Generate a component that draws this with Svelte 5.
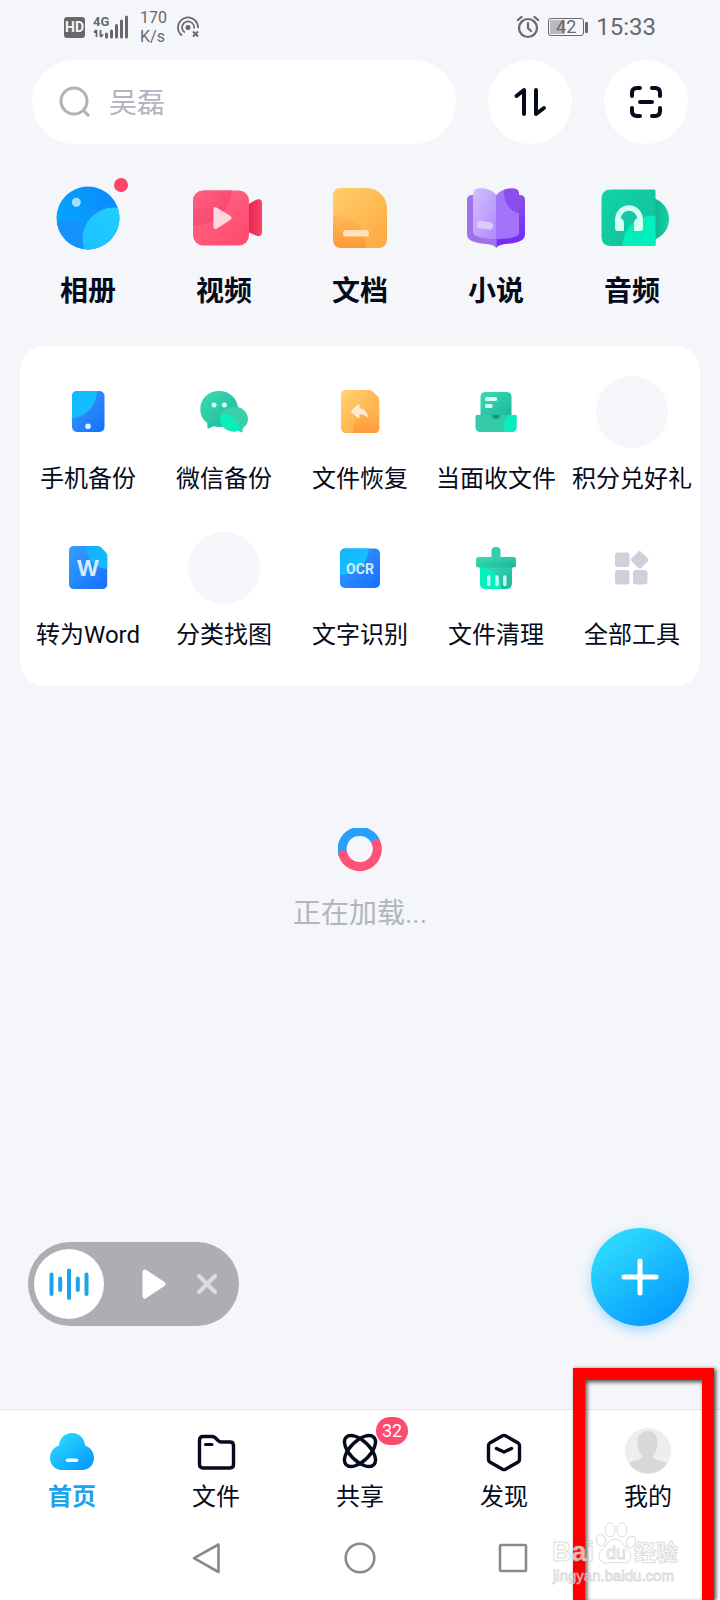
<script>
  const shortcuts = [
    { id: 'photo', label: '相册' },
    { id: 'video', label: '视频' },
    { id: 'doc', label: '文档' },
    { id: 'novel', label: '小说' },
    { id: 'audio', label: '音频' }
  ];
  const tools = [
    { id: 'phone', label: '手机备份' },
    { id: 'wechat', label: '微信备份' },
    { id: 'restore', label: '文件恢复' },
    { id: 'receive', label: '当面收文件' },
    { id: 'empty', label: '积分兑好礼' },
    { id: 'word', label: '转为Word' },
    { id: 'empty', label: '分类找图' },
    { id: 'ocr', label: '文字识别' },
    { id: 'clean', label: '文件清理' },
    { id: 'all', label: '全部工具' }
  ];
  const tabs = [
    { id: 'home', label: '首页' },
    { id: 'files', label: '文件' },
    { id: 'share', label: '共享', badge: 32 },
    { id: 'discover', label: '发现' },
    { id: 'mine', label: '我的' }
  ];
  let active = $state('home');
  let query = $state('');
</script>

<!-- shared gradients -->
<svg class="defs" width="0" height="0" aria-hidden="true">
  <defs>
    <linearGradient id="blue" x1="1" y1="0" x2="0" y2="0.6"><stop offset="0" stop-color="#0a84fd" /><stop offset="1" stop-color="#06a8fc" /></linearGradient>
    <linearGradient id="cyan" x1="1" y1="0" x2="0" y2="1"><stop offset="0" stop-color="#22d3ff" /><stop offset="1" stop-color="#1cbcff" /></linearGradient>
    <linearGradient id="royal" x1="0" y1="0" x2="1" y2="1"><stop offset="0" stop-color="#34a0fb" /><stop offset="1" stop-color="#196dff" /></linearGradient>
    <linearGradient id="sky" x1="0" y1="0" x2="1" y2="1"><stop offset="0" stop-color="#16a6ff" /><stop offset="1" stop-color="#12c4ff" /></linearGradient>
    <linearGradient id="pink" x1="0" y1="0" x2="1" y2="1"><stop offset="0" stop-color="#ff6d8c" /><stop offset="1" stop-color="#ff4468" /></linearGradient>
    <linearGradient id="rose" x1="0" y1="0" x2="1" y2="1"><stop offset="0.4" stop-color="#ff6c8b" /><stop offset="1" stop-color="#f93a63" /></linearGradient>
    <linearGradient id="crimson"><stop offset="0" stop-color="#e42350" /><stop offset="1" stop-color="#fb4468" /></linearGradient>
    <linearGradient id="gold" x1="0" y1="0" x2="1" y2="1"><stop offset="0" stop-color="#ffd470" /><stop offset="1" stop-color="#ffa23a" /></linearGradient>
    <linearGradient id="orange" x1="0" y1="0" x2="0" y2="1"><stop offset="0" stop-color="#ffb857" /><stop offset="0.6" stop-color="#ff9634" /></linearGradient>
    <linearGradient id="violet" x1="0" y1="0" x2="0" y2="1"><stop offset="0" stop-color="#8a50e6" /><stop offset="1" stop-color="#7226fa" /></linearGradient>
    <linearGradient id="lilac" x1="0" y1="0" x2="1" y2="1"><stop offset="0" stop-color="#d2bfff" /><stop offset="1" stop-color="#b18bfb" /></linearGradient>
    <linearGradient id="green" x1="0" y1="0" x2="1" y2="1"><stop offset="0" stop-color="#12d6aa" /><stop offset="1" stop-color="#14b898" /></linearGradient>
    <linearGradient id="mint" x1="0" y1="0" x2="1" y2="1"><stop offset="0" stop-color="#3adcb4" /><stop offset="1" stop-color="#1cb69a" /></linearGradient>
    <linearGradient id="neon" x1="0" y1="0" x2="1" y2="1"><stop offset="0" stop-color="#00ffc0" /><stop offset="1" stop-color="#06e6b8" /></linearGradient>
    <linearGradient id="disc"><stop offset="0.5" stop-color="#0ca382" /><stop offset="1" stop-color="#18d2a6" /></linearGradient>
    <linearGradient id="cloud" x1="0" y1="0" x2="1" y2="1"><stop offset="0.15" stop-color="#2ad6fd" /><stop offset="0.9" stop-color="#049cff" /></linearGradient>
    <clipPath id="c-photo"><circle cx="36" cy="36" r="31.500" /></clipPath>
    <clipPath id="c-video"><rect x="5" y="8.500" width="56" height="55" rx="10" /></clipPath>
    <clipPath id="c-doc"><path d="M17 6H42C54 6 63 15 63 27V57Q63 66 54 66H18Q9 66 9 57V14Q9 6 17 6Z" /></clipPath>
    <clipPath id="c-page"><path d="M36.300 13C41 7.500 48 5.500 55 6.800Q59 7.500 59 12V51C59 56 45 57 36.300 57Z" /></clipPath>
    <clipPath id="c-audio"><path d="M15 7.500H58Q59.500 7.500 59.500 9V62.500Q59.500 64 58 64H15Q5.500 64 5.500 54.500V17Q5.500 7.500 15 7.500Z" /></clipPath>
    <clipPath id="c-phone"><rect x="20" y="15" width="32.500" height="41" rx="5" /></clipPath>
    <clipPath id="c-bubble"><ellipse cx="46" cy="43" rx="14" ry="12.500" /></clipPath>
    <clipPath id="c-sheet"><path d="M22 14H45.500Q47.500 14 49 15.500L54 20.800Q55.200 22 55.200 24V52Q55.200 57 50.200 57H22Q17 57 17 52V19Q17 14 22 14Z" /></clipPath>
    <clipPath id="c-tray"><path d="M15.500 40Q15.500 39 16.500 39H55.500Q56.500 39 56.500 40V51Q56.500 56 51.500 56H20.500Q15.500 56 15.500 51Z" /></clipPath>
    <clipPath id="c-ocr"><rect x="16" y="16.500" width="40" height="39.500" rx="5" /></clipPath>
    <clipPath id="c-clean"><path d="M20 35H52V51Q52 57 46 57H26Q20 57 20 51Z" /></clipPath>
  </defs>
</svg>

{#snippet picture(id)}
  <svg class="pic" viewBox="0 0 72 72" aria-hidden="true">
    {#if id === 'photo'}
      <g clip-path="url(#c-photo)">
        <rect width="72" height="72" fill="url(#blue)" />
        <circle cx="17" cy="62" r="25" fill="#1593fa" />
        <circle cx="62" cy="57" r="31.500" fill="url(#cyan)" />
      </g>
      <circle cx="24.300" cy="20.300" r="4.500" fill="#a4deff" />
      <circle cx="69" cy="3" r="7" fill="#ff4569" />
    {:else if id === 'video'}
      <path d="M60 22.500L68 17.800Q74 16 74 21V50Q74 55.500 68 53.500L60 50Z" fill="url(#crimson)" />
      <g clip-path="url(#c-video)">
        <rect width="72" height="72" fill="url(#pink)" />
        <circle cx="6" cy="6" r="38" fill="url(#rose)" />
      </g>
      <path d="M25.500 27.500Q25.500 24 28.500 25.500L42.500 34Q44.500 36 42.500 37.800L29 46.500Q25.500 48 25.500 44.500Z" fill="#ffd6df" />
    {:else if id === 'doc'}
      <g clip-path="url(#c-doc)">
        <rect width="72" height="72" fill="url(#gold)" />
        <circle cx="12" cy="63" r="30" fill="url(#orange)" />
      </g>
      <rect x="19" y="48" width="26" height="6.500" rx="3" fill="#ffe3bc" />
    {:else if id === 'novel'}
      <path d="M12 13H36.300V66C33 60.500 22 63 13 59.500Q7 57.500 7 52V18Q7 13 12 13Z" fill="#a072ea" />
      <path d="M36.300 13H60Q65 13 65 18V52Q65 57.500 59 59.500C50 63 40 60.500 36.300 66Z" fill="url(#violet)" />
      <path d="M36.300 13C31.500 7.500 25 5.500 18 6.600Q13 7.500 13 12V50C14 56 28 57 36.300 57Z" fill="url(#lilac)" />
      <g clip-path="url(#c-page)">
        <rect x="36" width="30" height="60" fill="#a473fb" />
        <circle cx="64" cy="12" r="20" fill="#8a4dee" />
      </g>
      <rect x="17" y="39.500" width="16" height="7.500" rx="3.500" fill="#dccbff" transform="rotate(8 25 43)" />
    {:else if id === 'audio'}
      <circle cx="51" cy="37" r="22" fill="url(#disc)" />
      <g clip-path="url(#c-audio)">
        <rect width="72" height="72" fill="url(#green)" />
        <circle cx="57" cy="64" r="30.500" fill="#02efbc" />
      </g>
      <path d="M22 40V37A11 11 0 0 1 44 37V40" fill="none" stroke="#d4fff3" stroke-width="5.500" />
      <path d="M19 36H23Q28 36.500 28 41V49H21.500Q19 49 19 46Z" fill="#d4fff3" />
      <path d="M47 36H43Q38 36.500 38 41V49H44.500Q47 49 47 46Z" fill="#d4fff3" />
    {:else if id === 'phone'}
      <g clip-path="url(#c-phone)">
        <rect x="20" y="15" width="33" height="41" fill="url(#royal)" />
        <circle cx="17" cy="14.500" r="28" fill="url(#sky)" />
      </g>
      <circle cx="36" cy="50.300" r="2.800" fill="#dff1ff" />
    {:else if id === 'wechat'}
      <path d="M31 15C41.500 15 50 22.500 50 33S41.500 51 31 51Q28 51 25.500 50.300L21 52.300Q19.300 52.800 19.400 51L19.200 46.800C14.500 43.500 12.300 38.500 12.300 33C12.300 22.500 20.500 15 31 15Z" fill="url(#mint)" />
      <circle cx="26" cy="29" r="2.500" fill="#d4fff3" />
      <circle cx="36.400" cy="29" r="2.500" fill="#d4fff3" />
      <path d="M46 30.500C53.700 30.500 60 36 60 43Q60 48.500 55 52L54.500 55.500Q54 57 52.500 56L50 54.800Q48 55.500 46 55.500C38.300 55.500 32 50 32 43S38.300 30.500 46 30.500Z" fill="#38cfac" />
      <g clip-path="url(#c-bubble)"><circle cx="34" cy="56" r="18" fill="url(#neon)" opacity="0.85" /></g>
    {:else if id === 'restore'}
      <g clip-path="url(#c-sheet)">
        <rect x="17" y="14" width="39" height="43" fill="url(#gold)" />
        <circle cx="55" cy="57" r="26.500" fill="url(#orange)" />
      </g>
      <path d="M27.500 34.500L34 28.500Q35.500 27.500 35.500 29.500V32Q43 33 44.500 42.500Q41 38 35.500 38.500V41Q35.500 43 34 42L27.500 36.500Q26.500 35.500 27.500 34.500Z" fill="#ffecd0" />
    {:else if id === 'receive'}
      <path d="M25.500 16H46.500Q51.500 16 51.500 21V41H20.500V21Q20.500 16 25.500 16Z" fill="url(#mint)" />
      <rect x="25" y="21" width="12" height="4" rx="1.500" fill="#d9fff5" />
      <rect x="25" y="28" width="7.500" height="4" rx="1.500" fill="#d9fff5" />
      <g clip-path="url(#c-tray)">
        <rect x="15" y="39" width="42" height="17" fill="#35caaa" />
        <circle cx="60" cy="50" r="16" fill="#08edbc" />
      </g>
      <path d="M32 39H40A4 4 0 0 1 32 39Z" fill="#139d83" />
    {:else if id === 'word'}
      <g clip-path="url(#c-sheet)">
        <rect x="17" y="14" width="39" height="43" fill="url(#royal)" />
        <circle cx="56" cy="15" r="22" fill="url(#sky)" />
      </g>
      <text x="36" y="44" text-anchor="middle" class="mark word">W</text>
    {:else if id === 'ocr'}
      <g clip-path="url(#c-ocr)">
        <rect x="16" y="16" width="40" height="41" fill="url(#royal)" />
        <circle cx="17" cy="15" r="28" fill="url(#sky)" />
      </g>
      <text x="36" y="42" text-anchor="middle" class="mark ocr">OCR</text>
    {:else if id === 'clean'}
      <rect x="31.500" y="15" width="9" height="16" rx="4" fill="#35ceab" />
      <g clip-path="url(#c-clean)">
        <rect x="20" y="35" width="32" height="22" fill="url(#mint)" />
        <circle cx="22" cy="55" r="19" fill="#03f2bc" />
      </g>
      <rect x="16" y="25" width="40" height="10.500" rx="2.500" fill="url(#mint)" />
      <path d="M28.700 45V52.500M37 45V52.500M44.800 45V52.500" stroke="#cffff2" stroke-width="3.400" stroke-linecap="round" />
    {:else if id === 'all'}
      <g fill="#cfd0d9">
        <rect x="19" y="20.500" width="14.500" height="14.500" rx="3" />
        <rect x="19" y="38" width="14.500" height="14.500" rx="3" />
        <rect x="37" y="38" width="14.500" height="14.500" rx="3" />
        <rect x="37" y="21" width="13.500" height="13.500" rx="2" transform="rotate(45 43.700 27.700)" />
      </g>
    {:else}
      <circle cx="36" cy="36" r="36" fill="#f4f6fa" />
    {/if}
  </svg>
{/snippet}

<div class="screen">
  <header class="status">
    <div class="side">
      <span class="hd">HD</span>
      <svg width="37" height="24" viewBox="0 0 37 24" aria-label="4G">
        <text x="0" y="11" class="net">4G</text>
        <path d="M3.500 15V22M3.500 15L1 17.500M7.500 15V22M7.500 22L10 19.500" stroke="#66686c" stroke-width="1.800" fill="none" />
        <path d="M13.500 19V22M18.500 16V22M23.500 10.500V22M28.500 6V22M33.500 2V22" stroke="#66686c" stroke-width="3" stroke-linecap="round" />
      </svg>
      <span class="rate">170<br />K/s</span>
      <svg width="24" height="24" viewBox="0 0 24 24" fill="none" stroke="#66686c" stroke-width="1.800" aria-hidden="true">
        <circle cx="11" cy="12.500" r="1.600" fill="#66686c" />
        <path d="M5 20.500A10 10 0 1 1 21 13M7.800 17.500A6 6 0 1 1 17 13.500" />
        <path d="M16 16.500L21 21.500M21 16.500L16 21.500" />
      </svg>
    </div>
    <div class="side right">
      <svg width="24" height="24" viewBox="0 0 24 24" fill="none" stroke="#66686c" stroke-width="2.200" stroke-linecap="round" aria-hidden="true">
        <circle cx="12" cy="13" r="9" />
        <path d="M12 8V13L15 16M1.800 5L5.500 2M22.200 5L18.500 2" />
      </svg>
      <span class="battery"><span class="level" style="width: 42%"></span><b>42</b></span>
      <time>15:33</time>
    </div>
  </header>

  <div class="top">
    <label class="search">
      <svg width="32" height="32" viewBox="0 0 32 32" fill="none" stroke="#afb1bc" stroke-width="3" aria-hidden="true">
        <circle cx="15" cy="15" r="13" /><path d="M24 24L30 30" />
      </svg>
      <input type="search" placeholder="吴磊" aria-label="搜索" bind:value={query} />
    </label>
    <button class="round" aria-label="传输">
      <svg width="36" height="36" viewBox="0 0 36 36" fill="none" stroke="#050a1c" stroke-width="4" stroke-linecap="round" stroke-linejoin="round" aria-hidden="true">
        <path d="M4.500 12L12 6V30M24 6V30L32 24" />
      </svg>
    </button>
    <button class="round" aria-label="扫一扫">
      <svg width="36" height="36" viewBox="0 0 36 36" fill="none" stroke="#050a1c" stroke-width="4" stroke-linecap="round" aria-hidden="true">
        <path d="M4 12V9Q4 4 9 4H12M24 4H27Q32 4 32 9V12M32 24V27Q32 32 27 32H24M12 32H9Q4 32 4 27V24M12 18H24" />
      </svg>
    </button>
  </div>

  <nav class="shortcuts">
    {#each shortcuts as s}
      <button>{@render picture(s.id)}<span>{s.label}</span></button>
    {/each}
  </nav>

  <section class="card">
    {#each tools as t}
      <button>{@render picture(t.id)}<span>{t.label}</span></button>
    {/each}
  </section>

  <main class="loading">
    <svg width="44" height="44" viewBox="0 0 44 44" fill="none" stroke-width="9" aria-hidden="true">
      <path d="M5 26.500A17.500 17.500 0 0 1 38.400 15.500" stroke="#27a0fb" />
      <path d="M38.400 15.500A17.500 17.500 0 1 1 5 26.500" stroke="#ff5277" stroke-linecap="round" />
    </svg>
    <p>正在加载...</p>
  </main>

  <div class="floating">
    <div class="player">
      <button class="wave" aria-label="播放列表">
        <svg width="40" height="32" viewBox="0 0 40 32" stroke="#1ca3ec" stroke-width="4" stroke-linecap="round" aria-hidden="true">
          <path d="M2.500 6.500V26M11.200 10.500V22M20 2.500V30M28.800 10.500V22M37.500 6.500V26" />
        </svg>
      </button>
      <button aria-label="播放">
        <svg width="24" height="32" viewBox="0 0 24 32" aria-hidden="true">
          <path d="M3 4L21 16L3 28Z" fill="#fff" stroke="#fff" stroke-width="5" stroke-linejoin="round" />
        </svg>
      </button>
      <button aria-label="关闭">
        <svg width="20" height="20" viewBox="0 0 20 20" stroke="#dcdcdd" stroke-width="4" stroke-linecap="round" aria-hidden="true">
          <path d="M2 2L18 18M18 2L2 18" />
        </svg>
      </button>
    </div>
    <button class="fab" aria-label="新建">
      <svg width="38" height="38" viewBox="0 0 38 38" stroke="#fff" stroke-width="5" stroke-linecap="round" aria-hidden="true">
        <path d="M19 3V35M3 19H35" />
      </svg>
    </button>
  </div>

  <footer>
    <nav class="tabs">
      {#each tabs as t}
        <button class:active={active === t.id} onclick={() => (active = t.id)}>
          <span class="tab-icon">
            <svg width="48" height="48" viewBox="0 0 48 48" fill="none" stroke="#050a1c" stroke-width="3.400" stroke-linejoin="round" stroke-linecap="round" aria-hidden="true">
              {#if t.id === 'home'}
                <path d="M14 43C7 43 2 37.500 2 31C2 25 6 20 11 18.500C11.500 11 17 6 24 6S36.500 11 37 18.500C42 20 46 25 46 31C46 37.500 41 43 34 43Z" fill="url(#cloud)" stroke="none" />
                <path d="M19.500 33.300H28.500" stroke="#fff" />
              {:else if t.id === 'files'}
                <path d="M11 9.500H20Q22 9.500 23.500 11L26 13.500Q27.500 15 29.500 15H38Q41.500 15 41.500 18.500V37.500Q41.500 41 38 41H11Q7.500 41 7.500 37.500V13Q7.500 9.500 11 9.500Z" />
                <path d="M13.500 17.500H20" stroke-width="3" />
              {:else if t.id === 'share'}
                <ellipse cx="24" cy="24" rx="19.500" ry="10" transform="rotate(45 24 24)" />
                <ellipse cx="24" cy="24" rx="19.500" ry="10" transform="rotate(-45 24 24)" />
              {:else if t.id === 'discover'}
                <path d="M22.500 8.800Q24 8 25.500 8.800L38.200 16Q39.500 17 39.500 18.500V32.500Q39.500 34 38.200 35L25.500 42.200Q24 43 22.500 42.200L9.800 35Q8.500 34 8.500 32.500V18.500Q8.500 17 9.800 16Z" />
                <path d="M16.500 21.500L24 25L31.500 21.500" />
              {:else}
                <circle cx="24" cy="24" r="23" fill="#eeeeef" stroke="none" />
                <path d="M5 36.500C10 33 17 33.500 18.500 29C15 26 13.500 21 13.500 15C13.500 8 17.500 4 23.500 4S33.500 8 33.500 15C33.500 21 32 26 28.500 29C30 33.500 38 33 43 36.500A23 23 0 0 1 5 36.500Z" fill="#d8d8d9" stroke="none" />
              {/if}
            </svg>
            {#if t.badge}<span class="badge">{t.badge}</span>{/if}
          </span>
          <span>{t.label}</span>
        </button>
      {/each}
    </nav>
    <div class="system">
      <button aria-label="返回">
        <svg width="32" height="32" viewBox="0 0 32 32"><path d="M27.500 2.500V30L3 16.200Z" /></svg>
      </button>
      <button aria-label="主屏幕">
        <svg width="32" height="32" viewBox="0 0 32 32"><circle cx="16" cy="16" r="14.300" /></svg>
      </button>
      <button aria-label="最近任务">
        <svg width="32" height="32" viewBox="0 0 32 32"><rect x="3" y="3" width="26" height="26" rx="1" /></svg>
      </button>
    </div>
    <div class="frame"></div>
    <svg class="watermark" width="132" height="66" viewBox="0 0 132 66" aria-hidden="true">
      <g fill="#fff" fill-opacity="0.7" stroke="#b8b8b8" stroke-opacity="0.5" stroke-width="1">
        <text x="0" y="39" font-size="27" font-weight="700">Bai</text>
        <ellipse cx="49" cy="18" rx="4.500" ry="6" transform="rotate(-15 49 18)" />
        <ellipse cx="58" cy="8" rx="5" ry="7" />
        <ellipse cx="70" cy="8" rx="5" ry="7" />
        <ellipse cx="79" cy="20" rx="4.500" ry="6" transform="rotate(15 79 20)" />
        <path d="M63 17C69 17 71 23 76 28C82 35 78 42 71 41C66 40 60 40 56 41C48 42 44 34 50 28C55 23 57 17 63 17Z" />
        <text x="54" y="37" font-size="18">du</text>
        <text x="82" y="38" font-size="22" font-weight="700">经验</text>
        <text x="1" y="59" font-size="15">jingyan.baidu.com</text>
      </g>
    </svg>
  </footer>
</div>

<style>
  :global(body) {
    margin: 0;
    background: #f4f6fa;
  }
  .defs {
    position: absolute;
  }
  .screen {
    display: flex;
    flex-direction: column;
    min-height: 100vh;
    color: #050a1c;
    font-family: Roboto, 'Noto Sans CJK SC', sans-serif;
    overflow: hidden;
  }
  button {
    margin: 0;
    padding: 0;
    border: 0;
    background: none;
    color: inherit;
    font: inherit;
    cursor: pointer;
  }
  svg {
    display: block;
    flex: none;
  }
  .status {
    display: flex;
    justify-content: space-between;
    height: 60px;
    box-sizing: border-box;
    padding: 0 64px 6px;
    color: #66686c;
  }
  .side {
    display: flex;
    align-items: center;
    gap: 8px;
  }
  .hd {
    width: 21px;
    border-radius: 3px;
    background: #66686c;
    color: #f4f6fa;
    font-size: 14px;
    font-weight: 700;
    line-height: 21px;
    text-align: center;
  }
  .net {
    font: 700 13px 'Liberation Sans Narrow', Roboto, sans-serif;
    fill: #66686c;
  }
  .rate {
    margin: 0 2px;
    font-size: 16px;
    line-height: 19px;
  }
  .battery {
    position: relative;
    width: 34px;
    height: 16px;
    margin-right: 4px;
    border: 1px solid #66686c;
    border-radius: 3px;
    font-size: 18px;
    line-height: 16px;
    text-align: center;
  }
  .battery::after {
    content: '';
    position: absolute;
    top: 3px;
    right: -5px;
    width: 3px;
    height: 11px;
    border-radius: 1px;
    background: #66686c;
  }
  .level {
    position: absolute;
    top: 1px;
    bottom: 1px;
    left: 1px;
    background: #b9babd;
  }
  .battery b {
    position: relative;
    font-weight: 400;
  }
  time {
    font-size: 24px;
  }
  .top {
    display: flex;
    gap: 32px;
    padding: 0 32px;
  }
  .search {
    display: flex;
    flex: 1;
    align-items: center;
    gap: 18px;
    min-width: 0;
    height: 84px;
    box-sizing: border-box;
    padding: 0 28px 0 27px;
    border-radius: 42px;
    background: #fff;
  }
  .search input {
    flex: 1;
    min-width: 0;
    padding: 2px 0 0;
    border: 0;
    outline: 0;
    background: none;
    color: inherit;
    font: inherit;
    font-size: 28px;
  }
  .search input::placeholder {
    color: #b2b4be;
    opacity: 1;
  }
  .round {
    display: grid;
    place-items: center;
    width: 84px;
    height: 84px;
    border-radius: 50%;
    background: #fff;
  }
  .pic {
    width: 72px;
    height: 72px;
    overflow: visible;
  }
  .mark {
    fill: #d3eaff;
    font-family: Roboto, sans-serif;
    font-weight: 700;
  }
  .mark.word {
    font-family: Inter, sans-serif;
    font-size: 22px;
  }
  .mark.ocr {
    font-size: 14px;
  }
  .shortcuts,
  .card {
    display: grid;
    grid-template-columns: repeat(5, minmax(0, 1fr));
    margin: 0 20px;
  }
  .shortcuts button,
  .card button {
    display: flex;
    flex-direction: column;
    align-items: center;
    gap: 15px;
    white-space: nowrap;
  }
  .shortcuts {
    padding: 38px 0 34px;
    font-size: 28px;
    font-weight: 700;
  }
  .shortcuts button {
    gap: 18px;
  }
  .shortcuts span {
    line-height: 40px;
  }
  .card {
    row-gap: 37px;
    padding: 30px 0 35px;
    border-radius: 24px;
    background: #fff;
    font-size: 24px;
    line-height: 32px;
  }
  .loading {
    display: flex;
    flex: 1;
    flex-direction: column;
    align-items: center;
    gap: 22px;
    padding-top: 142px;
  }
  .loading p {
    margin: 0;
    color: #b2b4be;
    font-size: 28px;
    line-height: 40px;
  }
  .floating {
    display: flex;
    align-items: flex-end;
    justify-content: space-between;
    padding: 0 31px 83px 28px;
  }
  .player {
    display: flex;
    align-items: center;
    height: 84px;
    box-sizing: border-box;
    padding: 0 22px 0 6px;
    border-radius: 42px;
    background: #adaeb4;
  }
  .wave {
    display: grid;
    place-items: center;
    width: 70px;
    height: 70px;
    margin-right: 38px;
    border-radius: 50%;
    background: #fff;
  }
  .player button + button + button {
    margin-left: 31px;
  }
  .fab {
    display: grid;
    place-items: center;
    width: 98px;
    height: 98px;
    border-radius: 50%;
    background: linear-gradient(145deg, #2ad6fd 20%, #0498ff 90%);
    box-shadow: 0 4px 12px rgba(40, 170, 255, 0.4);
  }
  footer {
    position: relative;
    border-top: 1px solid #e4e6ea;
    background: #fff;
  }
  .tabs {
    display: grid;
    grid-template-columns: repeat(5, 1fr);
    padding: 17px 0 3px;
  }
  .tabs button {
    display: flex;
    flex-direction: column;
    align-items: center;
    gap: 6px;
    font-size: 24px;
    line-height: 32px;
  }
  .tabs .active {
    color: #1ca3ec;
    font-weight: 700;
  }
  .tab-icon {
    position: relative;
  }
  .badge {
    position: absolute;
    top: -10px;
    left: 40px;
    width: 32px;
    border-radius: 14px;
    background: #ff4a70;
    color: #fff;
    font-size: 18px;
    line-height: 28px;
    text-align: center;
  }
  .system {
    display: flex;
    align-items: center;
    justify-content: center;
    gap: 121px;
    height: 84px;
  }
  .system svg {
    fill: none;
    stroke: #8a8a8a;
    stroke-width: 2.6;
    stroke-linejoin: round;
  }
  .frame {
    position: absolute;
    top: -42px;
    right: 6px;
    bottom: 0;
    width: 117px;
    border: 12px solid #fd0000;
    border-bottom: 0;
    box-shadow: 2px 1px 4px rgba(0, 0, 0, 0.7), inset 2px 2px 4px rgba(0, 0, 0, 0.7);
    pointer-events: none;
  }
  .watermark {
    position: absolute;
    right: 36px;
    bottom: 12px;
    pointer-events: none;
    font-family: 'Liberation Sans', 'Noto Sans CJK SC', sans-serif;
  }
</style>
